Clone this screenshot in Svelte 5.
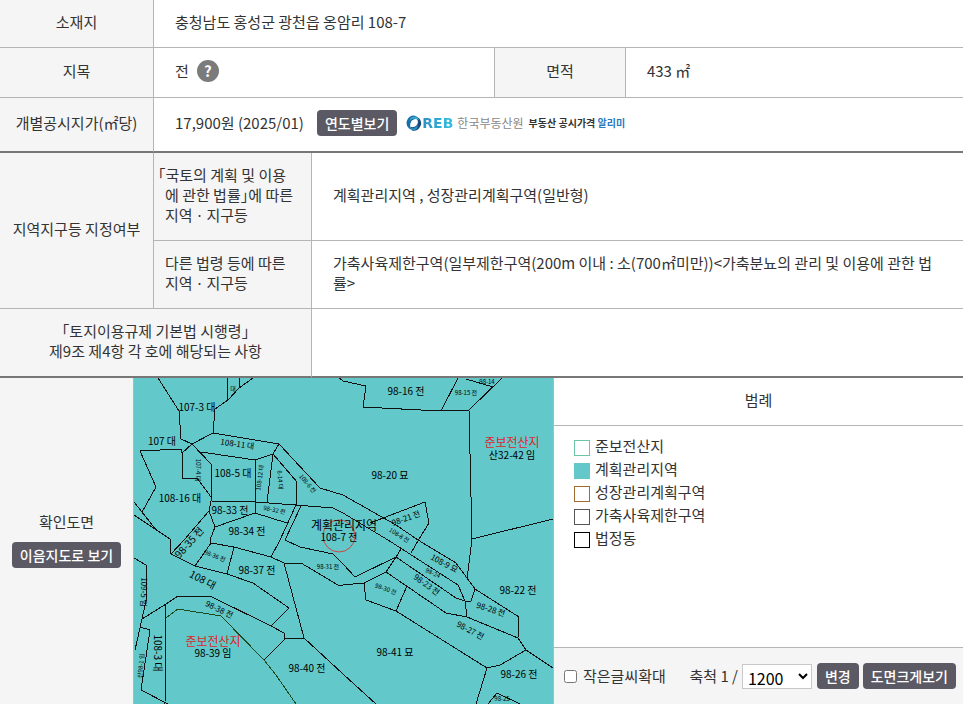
<script>
  const legend = [
    { name: '준보전산지', kind: 'forest' },
    { name: '계획관리지역', kind: 'planned' },
    { name: '성장관리계획구역', kind: 'growth' },
    { name: '가축사육제한구역', kind: 'livestock' },
    { name: '법정동', kind: 'district' }
  ];

  const scales = [600, 1000, 1200, 2400, 3000, 5000, 6000];

  let scale = 1200;
  let enlarge = false;

  // parcel boundaries
  const parcels = [
    '25,2 46,35 48,63 59,68 80,57 82,33 95,24 106,12 120,2',
    '94,2 95,24',
    '106,2 106,12',
    '59,68 49,77 48,73 7,75 23,111 9,136',
    '49,77 50,103 64,102 78,121',
    '1,126 24,155',
    '1,139 37,163 38,178',
    '59,68 78,88 78,125 76,135 82,151 77,164 78,167 62,190',
    '68,76 122,84 140,78 146,68 80,57',
    '122,84 122,137',
    '140,78 134,126',
    '140,78 164,106 163,129',
    '146,68 187,112 210,119 263,149 285,164 323,187 342,213 386,241 385,262 393,274 420,292',
    '78,125 122,126 163,129 200,132 210,137 255,164 325,209 332,225 338,225 342,213',
    '154,147 122,137 82,151',
    '163,129 147,164 138,181',
    '168,130 152,164 167,171 200,178 210,188 222,201 263,181 268,173',
    '76,135 52,163 38,178 62,190 94,198 120,207 156,232 138,250 77,220 45,220 33,228 9,243 14,220 13,189 1,182',
    '78,167 101,171 138,181 151,187 168,187 205,209 210,209 231,207 253,196 263,181',
    '101,171 94,198',
    '151,187 171,262 152,263 151,257 138,250',
    '152,263 131,284',
    '171,262 210,298 243,328',
    '33,228 32,328',
    '9,243 2,274',
    '7,251 17,254 8,314 35,328',
    '206,2 210,5 233,10 230,31 307,35 336,34 369,2',
    '325,2 308,35',
    '333,3 360,11',
    '336,34 339,163 420,143',
    '339,163 334,203',
    '237,147 292,126 296,147 286,163 278,177',
    '263,181 323,222 332,225 334,241 313,237 253,196',
    '334,241 385,262',
    '231,207 233,224 263,235 354,292 367,289 393,274',
    '274,210 263,235',
    '354,292 343,328',
    '355,328 364,317 387,328'
  ];

  const lots = [
    { x: 64, y: 35, text: '107-3 대' },
    { x: 29, y: 69, text: '107 대' },
    { x: 47, y: 126, text: '108-16 대' },
    { x: 100, y: 101, text: '108-5 대' },
    { x: 97, y: 138, text: '98-33 전' },
    { x: 114, y: 159, text: '98-34 전' },
    { x: 273, y: 19, text: '98-16 전' },
    { x: 257, y: 103, text: '98-20 묘' },
    { x: 379, y: 83, text: '산32-42 임' },
    { x: 206, y: 165, text: '108-7 전' },
    { x: 124, y: 198, text: '98-37 전' },
    { x: 80, y: 281, text: '98-39 임' },
    { x: 174, y: 296, text: '98-40 전' },
    { x: 262, y: 280, text: '98-41 묘' },
    { x: 385, y: 218, text: '98-22 전' },
    { x: 386, y: 302, text: '98-26 전' },
    { x: 68, y: 207, text: '108 대', angle: 28 },
    { x: 59, y: 169, text: '98-35 전', angle: -48 },
    { x: 21, y: 277, text: '108-3 대', angle: 90 },
    { x: 8, y: 216, text: '109-5 임', angle: 92, small: true },
    { x: 10, y: 290, text: '산98-1 임', angle: -84, tiny: true },
    { x: 104, y: 71, text: '108-11 대', angle: 8, small: true },
    { x: 63, y: 94, text: '107-4 대', angle: 90, tiny: true },
    { x: 129, y: 102, text: '108-12 대', angle: -82, tiny: true },
    { x: 145, y: 104, text: '8-14 대', angle: 85, tiny: true },
    { x: 173, y: 109, text: '108-6 전', angle: 50, tiny: true },
    { x: 141, y: 136, text: '98-32 전', angle: 12, tiny: true },
    { x: 81, y: 182, text: '98-36 전', angle: 22, tiny: true },
    { x: 85, y: 236, text: '98-38 전', angle: 26, small: true },
    { x: 195, y: 193, text: '98-31 전', tiny: true },
    { x: 100, y: 15, text: '대', tiny: true },
    { x: 333, y: 19, text: '98-15 전', tiny: true },
    { x: 354, y: 8, text: '98-14', tiny: true },
    { x: 274, y: 145, text: '98-21 전', angle: -20, small: true },
    { x: 265, y: 161, text: '108-8 전', angle: 32, tiny: true },
    { x: 310, y: 190, text: '108-9 묘', angle: 28, small: true },
    { x: 299, y: 199, text: '98-24', angle: 24, tiny: true },
    { x: 292, y: 211, text: '98-23 전', angle: 36, small: true },
    { x: 252, y: 215, text: '98-30 전', angle: 20, tiny: true },
    { x: 357, y: 236, text: '98-28 전', angle: 18, small: true },
    { x: 336, y: 257, text: '98-27 전', angle: 28, small: true },
    { x: 369, y: 325, text: '98-25', tiny: true }
  ];
</script>

<main>
  <table class="summary">
    <colgroup>
      <col class="col-label" />
      <col />
      <col class="col-area" />
      <col class="col-value" />
    </colgroup>
    <tbody>
      <tr>
        <th scope="row">소재지</th>
        <td colspan="3">충청남도 홍성군 광천읍 옹암리 108-7</td>
      </tr>
      <tr>
        <th scope="row">지목</th>
        <td class="ruled">
          <div class="inline">전 <button class="help" type="button">?</button></div>
        </td>
        <th scope="row">면적</th>
        <td>433 ㎡</td>
      </tr>
      <tr class="last">
        <th scope="row">개별공시지가(㎡당)</th>
        <td colspan="3">
          <div class="inline price">
            <span>17,900원 (2025/01)</span>
            <button class="btn" type="button">연도별보기</button>
            <a class="reb" href="#reb">
              <svg width="16" height="16" viewBox="0 0 16 16" aria-hidden="true">
                <path d="M8 0.5A7.5 7.5 0 0 0 3 13.5L6 15C3 11 3.5 6 9 4L13 4.500A7 7 0 0 0 8 .5Z" fill="#176fa8" />
                <path d="M13 3A7.500 7.500 0 0 1 6 15.500L4.500 12C10 13 13 9 11.500 5L10 2Z" fill="#164b7c" />
                <path d="M5 2.500Q11 0 13.500 5L10 4Q7 2.500 3 6Z" fill="#39acd1" />
                <path d="M3 12Q8 15 12 10Q12 15 7 15.500Z" fill="#2790bd" />
                <circle cx="8" cy="8" r="3" fill="#fff" />
              </svg>
              <span class="reb-mark">REB</span>
              <span class="reb-name">한국부동산원</span>
              <span class="reb-service">부동산 공시가격 <em>알리미</em></span>
            </a>
          </div>
        </td>
      </tr>
    </tbody>
  </table>

  <table class="zones">
    <colgroup>
      <col class="col-label" />
      <col class="col-law" />
      <col />
    </colgroup>
    <tbody>
      <tr>
        <th scope="rowgroup" rowspan="2">지역지구등 지정여부</th>
        <th scope="row" class="law hanging">「국토의 계획 및 이용<br />에 관한 법률」에 따른<br />지역ㆍ지구등</th>
        <td>계획관리지역 , 성장관리계획구역(일반형)</td>
      </tr>
      <tr>
        <th scope="row" class="law">다른 법령 등에 따른<br />지역ㆍ지구등</th>
        <td>가축사육제한구역(일부제한구역(200m 이내 : 소(700㎡미만))&lt;가축분뇨의 관리 및 이용에 관한 법률&gt;</td>
      </tr>
      <tr class="last">
        <th scope="row" colspan="2">「토지이용규제 기본법 시행령」<br />제9조 제4항 각 호에 해당되는 사항</th>
        <td></td>
      </tr>
    </tbody>
  </table>

  <section class="drawing">
    <div class="drawing-title">
      <span>확인도면</span>
      <button class="btn" type="button">이음지도로 보기</button>
    </div>

    <svg class="map" viewBox="1 2 419 326" role="img" aria-label="확인도면">
      <rect x="1" y="2" width="420" height="326" fill="#62c8c9" />
      <g class="lines">
        {#each parcels as points}
          <polyline {points} />
        {/each}
        <polyline class="forest-line" points="33,242 45,233 88,240 131,284 143,299 163,328" />
      </g>
      <circle class="target" cx="206" cy="160" r="16" />
      {#each lots as lot}
        <text
          class="lot"
          class:small={lot.small}
          class:tiny={lot.tiny}
          x={lot.x}
          y={lot.y}
          transform={lot.angle ? `rotate(${lot.angle} ${lot.x} ${lot.y})` : undefined}>{lot.text}</text>
      {/each}
      <text class="zone" x="211" y="154">계획관리지역</text>
      <text class="zone red" x="379" y="71">준보전산지</text>
      <text class="zone red" x="80" y="270">준보전산지</text>
    </svg>

    <div class="side">
      <h2>범례</h2>
      <ul>
        {#each legend as item}
          <li><i class={item.kind}></i><span>{item.name}</span></li>
        {/each}
      </ul>
      <div class="tools">
        <label class="enlarge"><input type="checkbox" bind:checked={enlarge} />작은글씨확대</label>
        <label for="scale">축척 1 /</label>
        <select id="scale" bind:value={scale}>
          {#each scales as s}
            <option value={s}>{s}</option>
          {/each}
        </select>
        <button class="btn" type="button">변경</button>
        <button class="btn" type="button">도면크게보기</button>
      </div>
    </div>
  </section>
</main>

<style>
  :global(body) {
    margin: 0;
    background: #fff;
  }

  main {
    color: #333;
    font-family: 'Noto Sans CJK KR', sans-serif;
    font-size: 15px;
    line-height: 20px;
  }

  table {
    width: 100%;
    table-layout: fixed;
    border-collapse: separate;
    border-spacing: 0;
  }

  .col-label {
    width: 154px;
  }

  .col-area {
    width: 131px;
  }

  .col-value {
    width: 35%;
  }

  .col-law {
    width: 158px;
  }

  th,
  td {
    padding: 12px 20px 15px 21px;
    border-bottom: 1px solid #b5b5b5;
    text-align: left;
    font-weight: 400;
  }

  th {
    padding-left: 0;
    padding-right: 0;
    border-right: 1px solid #b5b5b5;
    background: #f5f5f5;
    text-align: center;
    font-feature-settings: 'halt';
  }

  td.ruled {
    border-right: 1px solid #b5b5b5;
  }

  .last th,
  .last td {
    border-bottom: 2px solid #777;
  }

  .law {
    padding-left: 11px;
    text-align: left;
  }

  .hanging {
    text-indent: -7px;
  }

  .inline {
    display: flex;
    align-items: center;
    gap: 8px;
  }

  .price {
    gap: 9px;
  }

  .price .btn {
    margin-left: 4px;
  }

  .help {
    width: 22px;
    height: 22px;
    padding: 0;
    border: 0;
    border-radius: 50%;
    background: #7b7b7b;
    color: #fff;
    font: 700 15px/22px 'Noto Sans CJK KR', sans-serif;
    cursor: pointer;
  }

  .btn {
    height: 26px;
    padding: 0 8px;
    border: 0;
    border-radius: 4px;
    background: #5b5963;
    color: #fff;
    font: 500 14px/26px 'Noto Sans CJK KR', sans-serif;
    white-space: nowrap;
    cursor: pointer;
  }

  .reb {
    display: flex;
    align-items: center;
    color: #888;
    text-decoration: none;
    white-space: nowrap;
  }

  .reb-mark {
    margin-right: 4px;
    background: linear-gradient(90deg, #2a8fc2, #35c0e0);
    background-clip: text;
    color: transparent;
    font: 700 14px/20px 'DejaVu Sans', sans-serif;
  }

  .reb-name {
    margin-right: 5px;
    font-size: 12px;
  }

  .reb-service {
    color: #333;
    font-size: 10px;
    font-weight: 700;
  }

  .reb-service em {
    color: #2c78bf;
    font-style: normal;
  }

  .drawing {
    display: grid;
    grid-template-columns: 134px 419px 1fr;
  }

  .drawing-title {
    display: flex;
    flex-direction: column;
    align-items: center;
    justify-content: center;
    gap: 10px;
    padding-bottom: 2px;
    border-right: 1px solid #b5b5b5;
    background: #f5f5f5;
  }

  .map {
    display: block;
    width: 100%;
  }

  .lines {
    fill: none;
    stroke: #111;
    stroke-width: 1;
    shape-rendering: crispEdges;
  }

  .lines .forest-line {
    stroke: #1c4a1c;
  }

  .target {
    fill: none;
    stroke: #d0453f;
  }

  .lot {
    fill: #000;
    font-size: 10px;
    text-anchor: middle;
  }

  .small {
    font-size: 8px;
  }

  .tiny {
    font-size: 6px;
  }

  .zone {
    fill: #000;
    font-size: 12px;
    text-anchor: middle;
  }

  .red {
    fill: #e0242c;
  }

  .side {
    display: flex;
    flex-direction: column;
    border-left: 1px solid #b5b5b5;
  }

  h2 {
    margin: 0;
    padding: 12px 0 15px;
    border-bottom: 1px solid #b5b5b5;
    font-size: 15px;
    font-weight: 400;
    text-align: center;
  }

  ul {
    flex: 1;
    margin: 0;
    padding: 10px 20px;
    list-style: none;
  }

  li {
    display: flex;
    gap: 5px;
    height: 23px;
  }

  i {
    box-sizing: border-box;
    width: 16px;
    height: 16px;
    margin-top: 4px;
    border: 1px solid #000;
  }

  .forest {
    border-color: #6cc5a4;
  }

  .planned {
    border-color: #62c8c9;
    background: #62c8c9;
  }

  .growth {
    border-color: #a06c2c;
  }

  .livestock {
    border-color: #555;
  }

  .tools {
    display: flex;
    align-items: center;
    gap: 4px;
    padding: 15px 7px 15px 10px;
    border-top: 1px solid #b5b5b5;
    background: #f5f5f5;
    white-space: nowrap;
  }

  .enlarge {
    display: flex;
    align-items: center;
    gap: 6px;
    margin-right: auto;
  }

  .enlarge input {
    width: 13px;
    height: 13px;
    margin: 0;
  }

  select {
    width: 70px;
    height: 25px;
    margin-right: 1px;
    padding: 0 1px 3px;
    border: 1px solid #c8c8c8;
    background: #fff;
    color: #000;
    font: 400 16px/20px 'Noto Sans CJK KR', sans-serif;
  }
</style>
